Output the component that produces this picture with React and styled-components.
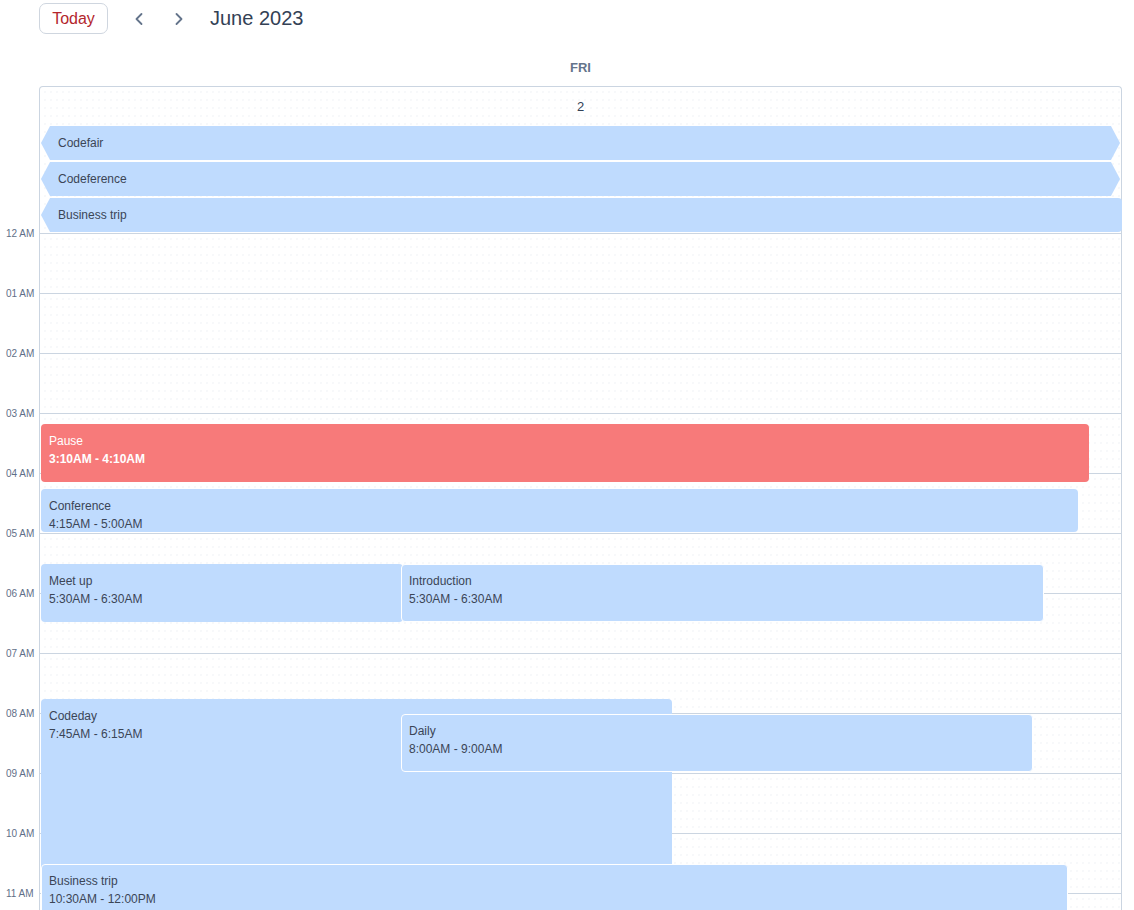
import React from "react";
import styled, { createGlobalStyle } from "styled-components";
import { ChevronLeft, ChevronRight } from "lucide-react";

const GlobalStyle = createGlobalStyle`
    html, body {
        margin: 0;
        padding: 0;
        height: 910px;
        overflow: hidden;
        background: #ffffff;
        font-family: "Liberation Sans", Arial, sans-serif;
    }
`;

const hours = [
    "12 AM", "01 AM", "02 AM", "03 AM", "04 AM", "05 AM",
    "06 AM", "07 AM", "08 AM", "09 AM", "10 AM", "11 AM",
];

const allDay = [
    { title: "Codefair", end: "arrow" },
    { title: "Codeference", end: "arrow" },
    { title: "Business trip", end: "round" },
];

// start / end in minutes from midnight, left / width in px inside the day column
const events = [
    { title: "Pause", time: "3:10AM - 4:10AM", start: 190, end: 250, left: 1, width: 1048, kind: "red" },
    { title: "Conference", time: "4:15AM - 5:00AM", start: 255, end: 300, left: 1, width: 1037 },
    { title: "Meet up", time: "5:30AM - 6:30AM", start: 330, end: 390, left: 1, width: 362 },
    { title: "Introduction", time: "5:30AM - 6:30AM", start: 330, end: 390, left: 361, width: 643, outlined: true },
    { title: "Codeday", time: "7:45AM - 6:15AM", start: 465, end: 640, left: 1, width: 631 },
    { title: "Daily", time: "8:00AM - 9:00AM", start: 480, end: 540, left: 361, width: 632, outlined: true },
    { title: "Business trip", time: "10:30AM - 12:00PM", start: 630, end: 720, left: 1, width: 1027, outlined: true },
];

export default function App() {
    return (
        <Page>
            <GlobalStyle />
            <Toolbar>
                <TodayButton>Today</TodayButton>
                <NavButton $first>
                    <ChevronLeft size={20} strokeWidth={2.2} />
                </NavButton>
                <NavButton>
                    <ChevronRight size={20} strokeWidth={2.2} />
                </NavButton>
                <Title>June 2023</Title>
            </Toolbar>
            <Calendar>
                <span />
                <DayHead>FRI</DayHead>
                <span />
                <TopBox>
                    <DateRow>2</DateRow>
                    <AllDay>
                        {allDay.map((e) => (
                            <AllDayEvent key={e.title} $end={e.end}>{e.title}</AllDayEvent>
                        ))}
                    </AllDay>
                </TopBox>
                <Gutter>
                    {hours.map((h) => (
                        <HourLabel key={h}><span>{h}</span></HourLabel>
                    ))}
                </Gutter>
                <TimeBody>
                    {hours.map((h) => (
                        <HourSlot key={h} />
                    ))}
                    {events.map((e) => (
                        <Event
                            key={e.title}
                            $top={e.start + 1}
                            $height={e.end - e.start - 2}
                            $left={e.left}
                            $width={e.width}
                            $kind={e.kind}
                            $outlined={e.outlined}
                        >
                            <EventTitle>{e.title}</EventTitle>
                            <EventTime $kind={e.kind}>{e.time}</EventTime>
                        </Event>
                    ))}
                </TimeBody>
            </Calendar>
        </Page>
    );
}

const dots = `
    background-image: radial-gradient(circle, #edf0f4 0.6px, transparent 0.8px);
    background-size: 6px 8px;
    background-position: 2px 1px;
`;

const Page = styled.div`
    width: 1134px;
    height: 910px;
    overflow: hidden;
`;

const Toolbar = styled.div`
    height: 36px;
    padding: 3px 0 0 39px;
    box-sizing: border-box;
    display: flex;
    align-items: flex-start;
`;

const TodayButton = styled.button`
    width: 69px;
    height: 31px;
    border: 1px solid #cfd6df;
    border-radius: 7px;
    background: #ffffff;
    color: #b3262d;
    font-family: "Liberation Sans", Arial, sans-serif;
    font-size: 16px;
    cursor: pointer;
    padding: 0;
`;

const NavButton = styled.button`
    width: 32px;
    height: 31px;
    margin-left: ${(p) => (p.$first ? "15px" : "8px")};
    border: none;
    background: transparent;
    color: #64748b;
    display: flex;
    align-items: center;
    justify-content: center;
    padding: 0;
    cursor: pointer;
`;

const Title = styled.h2`
    margin: 0 0 0 15px;
    height: 31px;
    line-height: 31px;
    font-size: 20px;
    font-weight: 400;
    color: #334155;
`;

const Calendar = styled.div`
    display: grid;
    grid-template-columns: 39px 1fr;
    padding-right: 12px;
`;

const DayHead = styled.div`
    height: 50px;
    display: flex;
    align-items: flex-end;
    justify-content: center;
    padding-bottom: 11px;
    box-sizing: border-box;
    font-size: 13px;
    line-height: 14px;
    font-weight: 700;
    color: #64748b;
`;

const TopBox = styled.div`
    border: 1px solid #cbd5e1;
    border-bottom: none;
    border-radius: 4px 4px 0 0;
    ${dots}
`;

const DateRow = styled.div`
    height: 39px;
    display: flex;
    align-items: center;
    justify-content: center;
    font-size: 13px;
    color: #334155;
`;

const AllDay = styled.div`
    display: flex;
    flex-direction: column;
    gap: 2px;
    padding: 0 0 1px 1px;
`;

const AllDayEvent = styled.div`
    height: 34px;
    margin-right: ${(p) => (p.$end === "arrow" ? "1px" : "-1px")};
    padding-left: 17px;
    display: flex;
    align-items: center;
    background: #bfdbfe;
    color: #3b4556;
    font-size: 12px;
    border-radius: ${(p) => (p.$end === "arrow" ? "0" : "0 4px 4px 0")};
    clip-path: ${(p) =>
        p.$end === "arrow"
            ? "polygon(9px 0, calc(100% - 9px) 0, 100% 50%, calc(100% - 9px) 100%, 9px 100%, 0 50%)"
            : "polygon(9px 0, 100% 0, 100% 100%, 9px 100%, 0 50%)"};
`;

const Gutter = styled.div`
    display: flex;
    flex-direction: column;
`;

const HourLabel = styled.div`
    height: 60px;
    padding-left: 6px;

    span {
        display: block;
        margin-top: -6px;
        font-size: 10px;
        line-height: 14px;
        color: #5f6f88;
    }
`;

const TimeBody = styled.div`
    position: relative;
    border-left: 1px solid #cbd5e1;
    border-right: 1px solid #cbd5e1;
`;

const HourSlot = styled.div`
    height: 60px;
    box-sizing: border-box;
    border-top: 1px solid #cbd5e1;
    ${dots}
`;

const Event = styled.div`
    position: absolute;
    top: ${(p) => p.$top}px;
    left: ${(p) => p.$left}px;
    width: ${(p) => p.$width}px;
    height: ${(p) => p.$height}px;
    box-sizing: border-box;
    padding: ${(p) => (p.$outlined ? "7px 7px" : "8px 8px")};
    border: ${(p) => (p.$outlined ? "1px solid #ffffff" : "none")};
    border-radius: 4px;
    background: ${(p) => (p.$kind === "red" ? "#f77a7a" : "#bfdbfe")};
    color: ${(p) => (p.$kind === "red" ? "#ffffff" : "#3b4556")};
    font-size: 12px;
    line-height: 18px;
    overflow: hidden;
`;

const EventTitle = styled.div`
    white-space: nowrap;
`;

const EventTime = styled.div`
    white-space: nowrap;
    font-weight: ${(p) => (p.$kind === "red" ? 700 : 400)};
`;
